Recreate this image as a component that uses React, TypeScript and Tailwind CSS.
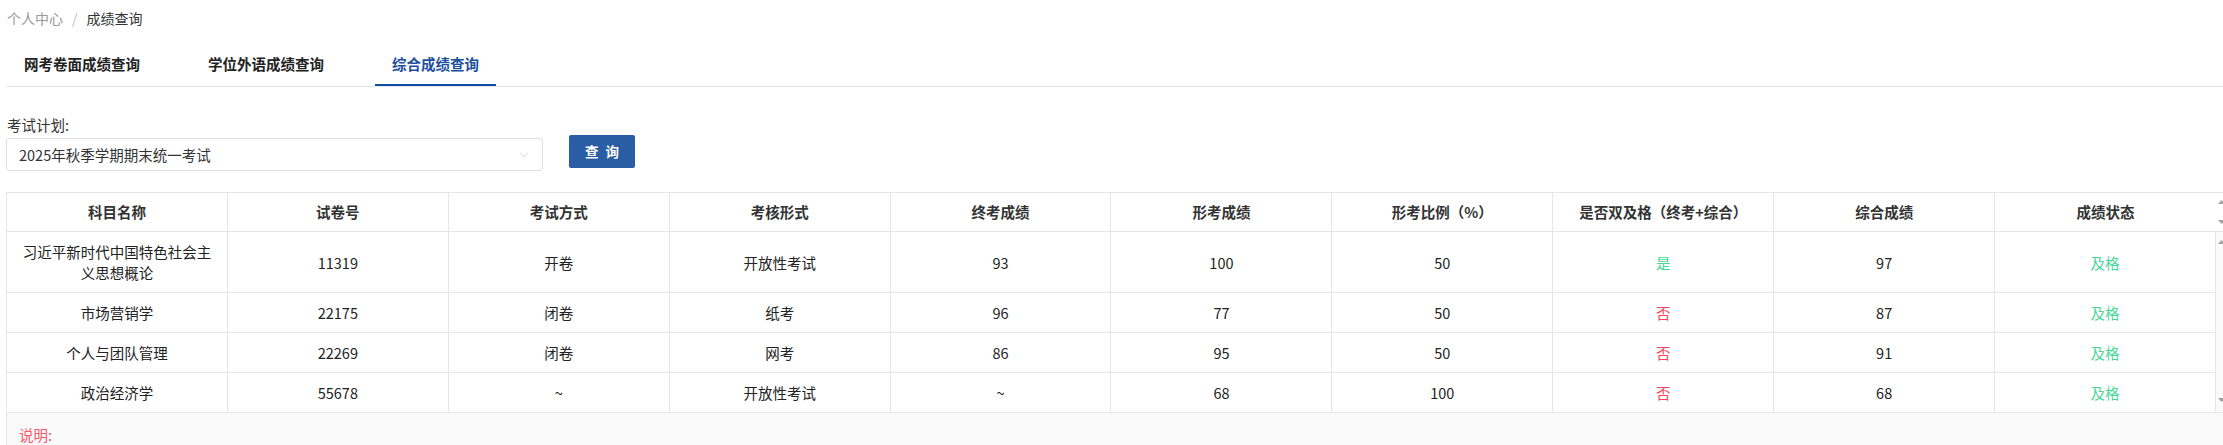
import { ChevronDown } from "lucide-react";

interface ScoreRow {
  name: string;
  paper: string;
  method: string;
  form: string;
  final: string;
  formative: string;
  ratio: string;
  dual: boolean;
  total: string;
  status: string;
}

const TABS = ["网考卷面成绩查询", "学位外语成绩查询", "综合成绩查询"];
const ACTIVE_TAB = 2;

const COLUMNS = [
  "科目名称",
  "试卷号",
  "考试方式",
  "考核形式",
  "终考成绩",
  "形考成绩",
  "形考比例（%）",
  "是否双及格（终考+综合）",
  "综合成绩",
  "成绩状态",
];

const ROWS: ScoreRow[] = [
  {
    name: "习近平新时代中国特色社会主义思想概论",
    paper: "11319",
    method: "开卷",
    form: "开放性考试",
    final: "93",
    formative: "100",
    ratio: "50",
    dual: true,
    total: "97",
    status: "及格",
  },
  {
    name: "市场营销学",
    paper: "22175",
    method: "闭卷",
    form: "纸考",
    final: "96",
    formative: "77",
    ratio: "50",
    dual: false,
    total: "87",
    status: "及格",
  },
  {
    name: "个人与团队管理",
    paper: "22269",
    method: "闭卷",
    form: "网考",
    final: "86",
    formative: "95",
    ratio: "50",
    dual: false,
    total: "91",
    status: "及格",
  },
  {
    name: "政治经济学",
    paper: "55678",
    method: "~",
    form: "开放性考试",
    final: "~",
    formative: "68",
    ratio: "100",
    dual: false,
    total: "68",
    status: "及格",
  },
];

function Arrow({ down }: { down?: boolean }) {
  return (
    <svg width="7" height="4" viewBox="0 0 7 4" className="ml-[2px]">
      <path d={down ? "M0 0H7L3.5 4Z" : "M3.5 0L7 4H0Z"} fill="#a3a3a3" />
    </svg>
  );
}

function Cell({ children, className = "" }: { children: React.ReactNode; className?: string }) {
  return (
    <div
      className={
        "flex items-center justify-center border-b border-r border-[#e6e6e6] px-[12px] py-[9px] text-center leading-[21px] " +
        className
      }
    >
      {children}
    </div>
  );
}

export default function App() {
  return (
    <div className="h-screen overflow-hidden bg-white pl-[6px] font-['Noto_Sans_CJK_SC','Noto_Sans',sans-serif] text-[14.5px] text-[#222]">
      {/* breadcrumb */}
      <div className="flex h-[36px] items-center pl-px text-[14px]">
        <span className="text-[#999]">个人中心</span>
        <span className="mx-[9px] text-[#bbb]">/</span>
        <span className="text-[#333]">成绩查询</span>
      </div>

      {/* tabs */}
      <div className="mt-[6px] flex h-[45px] gap-[34px] border-b border-[#e4e7ed] pl-px">
        {TABS.map((t, i) => (
          <div
            key={t}
            className={
              i === ACTIVE_TAB
                ? "flex items-center px-[17px] font-semibold text-[#1d4f9e] shadow-[inset_0_-2px_0_#0f4ea6]"
                : "flex items-center px-[17px] font-semibold text-[#222]"
            }
          >
            {t}
          </div>
        ))}
      </div>

      {/* filter */}
      <div className="mt-[28px] flex items-end gap-[26px]">
        <div className="w-[537px]">
          <div className="pl-px leading-[20px] text-[#333]">考试计划:</div>
          <div className="mt-[3px] flex h-[33px] items-center justify-between rounded-[3px] border border-[#dcdfe6] pl-[12px] pr-[11px] text-[#333]">
            <span>2025年秋季学期期末统一考试</span>
            <ChevronDown className="size-[14px] text-[#c0c4cc]" strokeWidth={1.2} />
          </div>
        </div>
        <button className="mb-[3px] flex h-[33px] w-[66px] items-center justify-center rounded-[2px] bg-[#2a5ea4] pl-[7px] text-[13.5px] font-semibold tracking-[7px] text-white">
          查询
        </button>
      </div>

      {/* table */}
      <div className="mt-[21px] border-l border-t border-[#e6e6e6]">
        <div className="flex border-b border-[#e6e6e6]">
          <div className="grid flex-1 grid-cols-10">
            {COLUMNS.map((c, i) => (
              <div
                key={c}
                className={
                  i === COLUMNS.length - 1
                    ? "py-[9px] text-center font-semibold leading-[20px] text-[#333]"
                    : "border-r border-[#e6e6e6] py-[9px] text-center font-semibold leading-[20px] text-[#333]"
                }
              >
                {c}
              </div>
            ))}
          </div>
          <div className="flex w-[7px] flex-col justify-between py-[7px]">
            <Arrow />
            <Arrow down />
          </div>
        </div>

        <div className="flex">
          <div className="flex-1">
            {ROWS.map((r) => (
              <div key={r.paper} className="grid grid-cols-10">
                <Cell>{r.name}</Cell>
                <Cell>{r.paper}</Cell>
                <Cell>{r.method}</Cell>
                <Cell>{r.form}</Cell>
                <Cell>{r.final}</Cell>
                <Cell>{r.formative}</Cell>
                <Cell>{r.ratio}</Cell>
                <Cell className={r.dual ? "text-[#47d597]" : "text-[#f5455c]"}>{r.dual ? "是" : "否"}</Cell>
                <Cell>{r.total}</Cell>
                <Cell className="text-[#47d597]">{r.status}</Cell>
              </div>
            ))}
          </div>
          <div className="flex w-[7px] flex-col justify-between border-b border-[#e6e6e6] bg-[#fafafa] pb-[10px] pt-[8px]">
            <Arrow />
            <Arrow down />
          </div>
        </div>

        <div className="bg-[#fafafa] px-[12px] pb-[40px] pt-[11px]">
          <div className="leading-[21px] text-[#f5586c]">说明:</div>
        </div>
      </div>
    </div>
  );
}
